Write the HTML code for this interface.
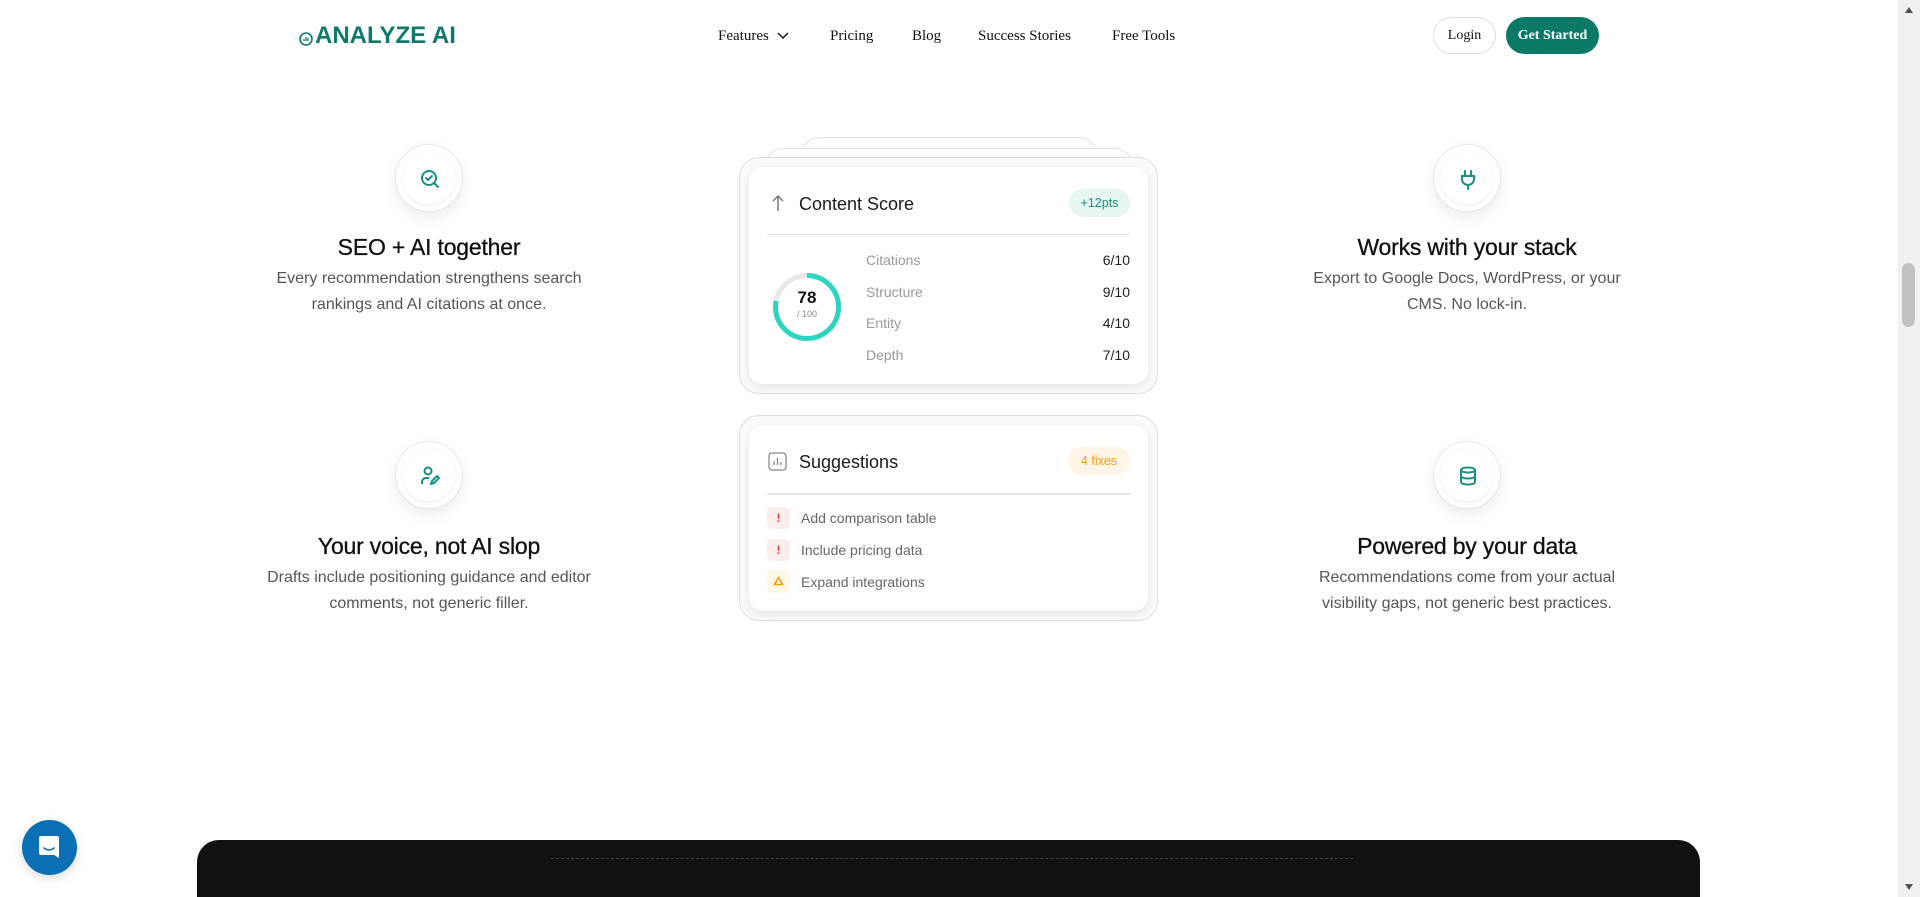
<!DOCTYPE html>
<html style="overflow:hidden;height:897px"><head><meta charset="utf-8"><style>
*{margin:0;padding:0;box-sizing:border-box}
body{width:1920px;height:897px;overflow:hidden;background:#fff;font-family:"Liberation Sans",sans-serif;position:relative;color:#111}
.abs{position:absolute}
.nav{font-family:"Liberation Serif",serif;font-size:15px;color:#111;top:28px}
.feat{position:absolute;width:440px;text-align:center}
.ic{position:absolute;width:68px;height:68px;border-radius:50%;background:#fff;border:1px solid #e6e6e6;box-shadow:0 6px 14px rgba(0,0,0,.08)}
.ic .in{position:absolute;left:7px;top:7px;width:52px;height:52px;border-radius:50%;background:#fff;box-shadow:0 2px 6px rgba(0,0,0,.06)}
.ic svg{position:absolute;left:23px;top:23px}
.ft{font-size:23px;font-weight:500;color:#111;letter-spacing:-.2px;-webkit-text-stroke:.3px #111}
.fd{font-size:16px;color:#555;line-height:26px}
.outer{position:absolute;border:1px solid #dedede;border-radius:20px;background:#fafafa}
.inner{position:absolute;background:#fff;border-radius:14px;box-shadow:0 3px 10px rgba(0,0,0,.09)}
.row{position:absolute;font-size:14px}
</style></head><body>

<!-- header -->
<div class="abs" style="left:298px;top:22px;display:flex;align-items:center;color:#0f7a6a">
<svg width="16" height="16" viewBox="0 0 16 16" style="margin-top:6px"><circle cx="8" cy="8" r="6" fill="none" stroke="#0f7a6a" stroke-width="1.6"/><path d="M6 10V8M8 10V6M10 10V7" stroke="#0f7a6a" stroke-width="1.3"/></svg>
<span style="font-size:24px;font-weight:bold;letter-spacing:0;margin-left:1px">ANALYZE AI</span></div>
<div class="abs nav" style="left:718px">Features <svg width="12" height="8" viewBox="0 0 12 8" style="margin-left:4px"><path d="M1 1l5 5 5-5" fill="none" stroke="#111" stroke-width="1.4"/></svg></div>
<div class="abs nav" style="left:830px">Pricing</div>
<div class="abs nav" style="left:912px">Blog</div>
<div class="abs nav" style="left:978px">Success Stories</div>
<div class="abs nav" style="left:1112px">Free Tools</div>
<div class="abs" style="left:1433px;top:17px;width:63px;height:37px;border:1px solid #ddd;border-radius:19px;font-family:'Liberation Serif',serif;font-size:14px;line-height:35px;text-align:center">Login</div>
<div class="abs" style="left:1506px;top:17px;width:93px;height:37px;background:#0a7a66;border-radius:19px;font-family:'Liberation Serif',serif;font-size:14px;font-weight:bold;color:#fff;line-height:37px;text-align:center">Get Started</div>

<!-- left features -->
<div class="ic" style="left:395px;top:144px"><div class="in"></div><svg width="22" height="22" viewBox="0 0 22 22"><circle cx="10" cy="10" r="7" fill="none" stroke="#1a9080" stroke-width="2"/><path d="M7 10l2 2 4-4M15 15l4 4" fill="none" stroke="#1a9080" stroke-width="2" stroke-linecap="round"/></svg></div>
<div class="feat" style="left:209px;top:234px"><div class="ft">SEO + AI together</div><div class="fd" style="margin-top:5px">Every recommendation strengthens search<br>rankings and AI citations at once.</div></div>

<div class="ic" style="left:395px;top:441px"><div class="in"></div><svg width="22" height="22" viewBox="0 0 22 22"><circle cx="9" cy="6" r="3.5" fill="none" stroke="#1a9080" stroke-width="2"/><path d="M3 19v-2a4 4 0 014-4h3M12 19l1-3 5-5 2 2-5 5z" fill="none" stroke="#1a9080" stroke-width="2" stroke-linejoin="round"/></svg></div>
<div class="feat" style="left:209px;top:533px"><div class="ft">Your voice, not AI slop</div><div class="fd" style="margin-top:5px">Drafts include positioning guidance and editor<br>comments, not generic filler.</div></div>

<!-- right features -->
<div class="ic" style="left:1433px;top:144px"><div class="in"></div><svg width="22" height="22" viewBox="0 0 22 22"><path d="M8 3v5M14 3v5M5 8h12v3a6 6 0 01-12 0zM11 17v4" fill="none" stroke="#1a9080" stroke-width="2" stroke-linecap="round"/></svg></div>
<div class="feat" style="left:1247px;top:234px"><div class="ft">Works with your stack</div><div class="fd" style="margin-top:5px">Export to Google Docs, WordPress, or your<br>CMS. No lock-in.</div></div>

<div class="ic" style="left:1433px;top:441px"><div class="in"></div><svg width="22" height="22" viewBox="0 0 22 22"><ellipse cx="11" cy="5" rx="7" ry="2.5" fill="none" stroke="#1a9080" stroke-width="2"/><path d="M4 5v12c0 1.4 3 2.5 7 2.5s7-1.1 7-2.5V5M4 11c0 1.4 3 2.5 7 2.5s7-1.1 7-2.5" fill="none" stroke="#1a9080" stroke-width="2"/></svg></div>
<div class="feat" style="left:1247px;top:533px"><div class="ft">Powered by your data</div><div class="fd" style="margin-top:5px">Recommendations come from your actual<br>visibility gaps, not generic best practices.</div></div>

<!-- card 1 -->
<div class="abs" style="left:801px;top:137px;width:296px;height:60px;border:1px solid #e2e2e2;border-radius:18px;background:#fff"></div>
<div class="abs" style="left:765px;top:148px;width:368px;height:60px;border:1px solid #e2e2e2;border-radius:18px;background:#fff"></div>
<div class="outer" style="left:739px;top:157px;width:419px;height:237px"></div>
<div class="inner" style="left:749px;top:167px;width:399px;height:217px"></div>
<svg class="abs" style="left:771px;top:194px" width="14" height="18" viewBox="0 0 14 18"><path d="M7 17V2M2 7l5-5 5 5" fill="none" stroke="#777" stroke-width="1.5"/></svg>
<div class="abs" style="left:799px;top:194px;font-size:18px;font-weight:500;color:#1a1a1a">Content Score</div>
<div class="abs" style="left:1069px;top:189px;width:61px;height:28px;border-radius:14px;background:#e6f6f2;color:#1a8f7a;font-size:12.5px;line-height:28px;text-align:center">+12pts</div>
<div class="abs" style="left:767px;top:234px;width:363px;height:1px;background:#e6e6e6"></div>
<svg class="abs" style="left:772px;top:272px" width="70" height="70" viewBox="0 0 70 70"><circle cx="35" cy="35" r="31.5" fill="none" stroke="#e8e8e8" stroke-width="5"/><circle cx="35" cy="35" r="31.5" fill="none" stroke="#2dd4bf" stroke-width="5" stroke-dasharray="154.4 198" transform="rotate(-90 35 35)"/></svg>
<div class="abs" style="left:772px;top:288px;width:70px;text-align:center;font-size:17px;font-weight:bold">78</div>
<div class="abs" style="left:772px;top:309px;width:70px;text-align:center;font-size:9px;color:#888">/ 100</div>
<div class="row" style="left:866px;top:252px;color:#999">Citations</div><div class="row" style="left:1070px;width:60px;text-align:right;top:252px;color:#222">6/10</div>
<div class="row" style="left:866px;top:284px;color:#999">Structure</div><div class="row" style="left:1070px;width:60px;text-align:right;top:284px;color:#222">9/10</div>
<div class="row" style="left:866px;top:315px;color:#999">Entity</div><div class="row" style="left:1070px;width:60px;text-align:right;top:315px;color:#222">4/10</div>
<div class="row" style="left:866px;top:347px;color:#999">Depth</div><div class="row" style="left:1070px;width:60px;text-align:right;top:347px;color:#222">7/10</div>

<!-- card 2 -->
<div class="outer" style="left:739px;top:415px;width:419px;height:206px"></div>
<div class="inner" style="left:749px;top:425px;width:399px;height:186px"></div>
<svg class="abs" style="left:768px;top:452px" width="19" height="19" viewBox="0 0 19 19"><rect x="1" y="1" width="17" height="17" rx="3" fill="none" stroke="#888" stroke-width="1.3"/><path d="M6 13V9M9.5 13V6M13 13V10" stroke="#888" stroke-width="1.3"/></svg>
<div class="abs" style="left:799px;top:452px;font-size:18px;font-weight:500;color:#1a1a1a">Suggestions</div>
<div class="abs" style="left:1068px;top:447px;width:62px;height:28px;border-radius:14px;background:#fff5e6;color:#f59e0b;font-size:12.5px;line-height:28px;text-align:center">4 fixes</div>
<div class="abs" style="left:767px;top:493px;width:363px;height:2px;background:#e6e6e6"></div>
<div class="abs" style="left:767px;top:507px;width:23px;height:22px;border-radius:5px;background:#fdecec;color:#ef4444;font-size:12px;font-weight:bold;text-align:center;line-height:22px">!</div>
<div class="row" style="left:801px;top:510px;color:#666">Add comparison table</div>
<div class="abs" style="left:767px;top:539px;width:23px;height:22px;border-radius:5px;background:#fdecec;color:#ef4444;font-size:12px;font-weight:bold;text-align:center;line-height:22px">!</div>
<div class="row" style="left:801px;top:542px;color:#666">Include pricing data</div>
<div class="abs" style="left:767px;top:570px;width:23px;height:23px;border-radius:5px;background:#fff8e6"><svg width="23" height="23" viewBox="0 0 23 23"><path d="M11.5 7.5l4 7h-8z" fill="none" stroke="#f59e0b" stroke-width="1.6" stroke-linejoin="round"/></svg></div>
<div class="row" style="left:801px;top:574px;color:#666">Expand integrations</div>

<!-- bottom -->
<div class="abs" style="left:197px;top:840px;width:1503px;height:57px;background:#111;border-radius:22px 22px 0 0"></div>
<div class="abs" style="left:551px;top:858px;width:802px;border-top:1px dashed #444"></div>
<div class="abs" style="left:22px;top:820px;width:55px;height:55px;border-radius:50%;background:#0a6fb4;box-shadow:0 3px 10px rgba(0,0,0,.15)"><svg style="position:absolute;left:16px;top:15px" width="22" height="26" viewBox="0 0 22 26"><path d="M3 1h16a2 2 0 012 2v20l-5-3H3a2 2 0 01-2-2V3a2 2 0 012-2z" fill="#fff"/><path d="M6 13c3 2.5 7 2.5 10 0" fill="none" stroke="#0a6fb4" stroke-width="1.6" stroke-linecap="round"/></svg></div>

<!-- scrollbar -->
<div class="abs" style="left:1898px;top:0;width:22px;height:897px;background:#f1f1f1"></div>
<div class="abs" style="left:1902px;top:263px;width:13px;height:64px;background:#c1c1c1;border-radius:7px"></div>
<svg class="abs" style="left:1904px;top:6px" width="10" height="8" viewBox="0 0 10 8"><path d="M5 1l4 6H1z" fill="#505050"/></svg>
<svg class="abs" style="left:1904px;top:883px" width="10" height="8" viewBox="0 0 10 8"><path d="M5 7l4-6H1z" fill="#505050"/></svg>
</body></html>
